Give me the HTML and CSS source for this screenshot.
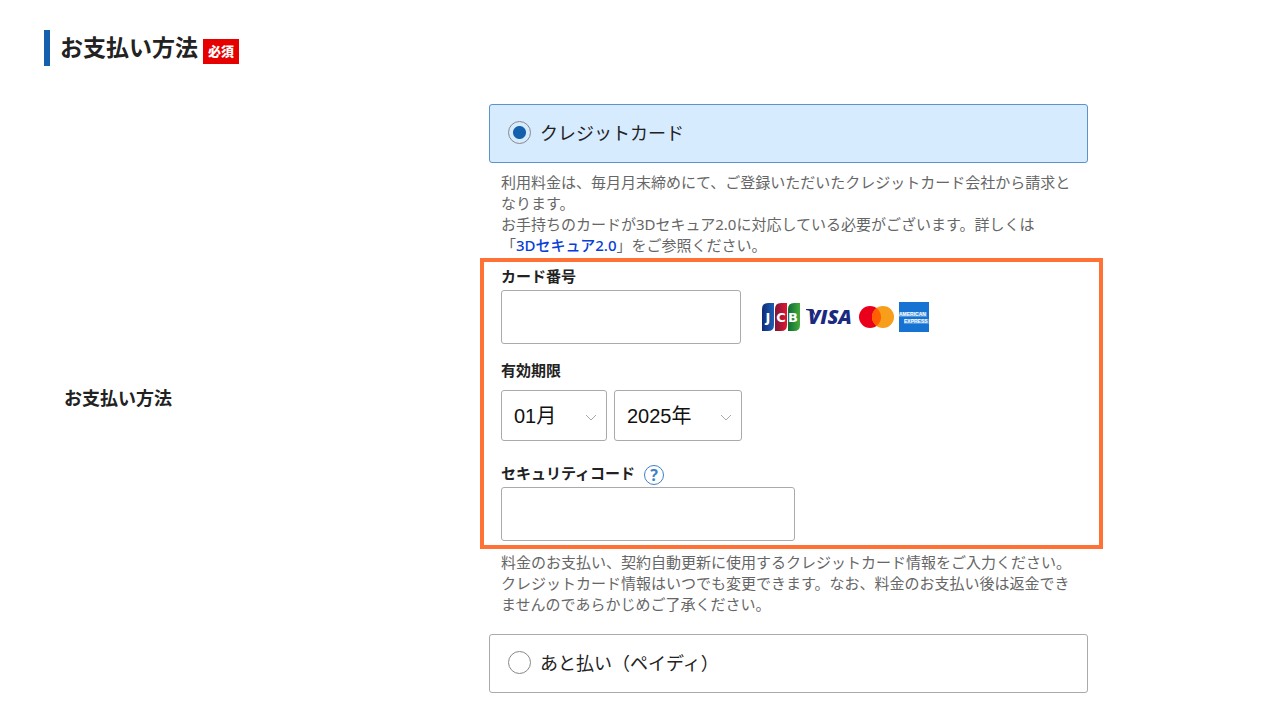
FILE: index.html
```html
<!DOCTYPE html>
<html lang="ja">
<head>
    <meta charset="UTF-8">
    <meta name="viewport" content="width=device-width, initial-scale=1.0">
    <title>お支払い方法</title>
    <link rel="stylesheet" href="styles.css">
</head>
<body>

    <main class="page">
        <header class="heading">
            <h1>お支払い方法</h1>
            <span class="required">必須</span>
        </header>

        <form class="payment">
            <h2 class="row-title" id="method-title">お支払い方法</h2>

            <div class="methods" role="radiogroup" aria-labelledby="method-title">
                <!-- クレジットカード -->
                <label class="option option-active">
                    <input type="radio" name="method" value="card" checked>
                    クレジットカード
                </label>

                <p class="note note-top">
                    利用料金は、毎月月末締めにて、ご登録いただいたクレジットカード会社から請求となります。<br>
                    お手持ちのカードが3Dセキュア2.0に対応している必要がございます。詳しくは<br>
                    「<a href="#">3Dセキュア2.0</a>」をご参照ください。
                </p>

                <div class="card-form">
                    <div class="field">
                        <label class="field-label" for="card-number">カード番号</label>
                        <div class="card-row">
                            <input class="text-box number-box" type="text" id="card-number" inputmode="numeric">
                            <div class="brands">
                                <!-- JCB -->
                                <svg width="39" height="30" viewBox="0 0 39 30" role="img" aria-label="JCB">
                                    <defs>
                                        <linearGradient id="jcb-blue"><stop offset="0" stop-color="#0f2a78"/><stop offset="1" stop-color="#1b5fb5"/></linearGradient>
                                        <linearGradient id="jcb-red"><stop offset="0" stop-color="#7d1735"/><stop offset="1" stop-color="#e01533"/></linearGradient>
                                        <linearGradient id="jcb-green"><stop offset="0" stop-color="#0c6b35"/><stop offset="1" stop-color="#45ab3c"/></linearGradient>
                                    </defs>
                                    <path d="M6 1H12V23Q12 29 6 29H0V7Q0 1 6 1Z" fill="url(#jcb-blue)"/>
                                    <path d="M19 1H25V23Q25 29 19 29H13V7Q13 1 19 1Z" fill="url(#jcb-red)"/>
                                    <path d="M32 1H38V23Q38 29 32 29H26V7Q26 1 32 1Z" fill="url(#jcb-green)"/>
                                    <text class="jcb-text" x="6 19 31" y="20" text-anchor="middle">JCB</text>
                                </svg>
                                <!-- VISA -->
                                <svg width="48" height="30" viewBox="0 0 48 30" role="img" aria-label="VISA">
                                    <path d="M0 7H6Q8 7 8 9L10 15Q7 9 0 8Z" fill="#1b2a80"/>
                                    <text class="visa-text" x="2" y="22">VISA</text>
                                </svg>
                                <!-- Mastercard -->
                                <svg width="35" height="22" viewBox="0 0 35 22" role="img" aria-label="Mastercard">
                                    <circle cx="11" cy="11" r="11" fill="#eb001b"/>
                                    <circle cx="24" cy="11" r="11" fill="#f79e1b"/>
                                    <path d="M17.500 2.100A11 11 0 0 1 17.500 19.900A11 11 0 0 1 17.500 2.100Z" fill="#ff5f00"/>
                                </svg>
                                <!-- American Express -->
                                <svg width="30" height="30" viewBox="0 0 30 30" role="img" aria-label="American Express">
                                    <rect width="30" height="30" fill="#1673d1"/>
                                    <rect x="0" y="10" width="28" height="5" fill="#4f98df"/>
                                    <rect x="5" y="17" width="25" height="5" fill="#4f98df"/>
                                    <text class="amex-text" x="0" y="14">AMERICAN</text>
                                    <text class="amex-text" x="5" y="21">EXPRESS</text>
                                </svg>
                            </div>
                        </div>
                    </div>

                    <div class="field expiry" role="group" aria-labelledby="expiry-title">
                        <span class="field-label" id="expiry-title">有効期限</span>
                        <div class="expiry-row">
                            <select class="month" aria-label="有効期限（月）">
                                <option>01月</option>
                            </select>
                            <select class="year" aria-label="有効期限（年）">
                                <option>2025年</option>
                            </select>
                        </div>
                    </div>

                    <div class="field">
                        <div class="code-title">
                            <label class="field-label" for="security-code">セキュリティコード</label>
                            <button class="help" type="button" aria-label="セキュリティコードについて">?</button>
                        </div>
                        <input class="text-box code-box" type="text" id="security-code" inputmode="numeric">
                    </div>
                </div>

                <p class="note note-bottom">
                    料金のお支払い、契約自動更新に使用するクレジットカード情報をご入力ください。<br>
                    クレジットカード情報はいつでも変更できます。なお、料金のお支払い後は返金できませんのであらかじめご了承ください。
                </p>

                <!-- あと払い -->
                <label class="option">
                    <input type="radio" name="method" value="paidy">
                    あと払い（ペイディ）
                </label>
            </div>
        </form>
    </main>

</body>
</html>
```

FILE: styles.css
```css
* {
    box-sizing: border-box;
}
body {
    margin: 0;
    background: #fff;
    color: #222;
    font-family: "Noto Sans", "Noto Sans CJK JP", sans-serif;
}
h1, h2, p {
    margin: 0;
}
.page {
    padding: 30px 15% 24px 44px;
}
.heading {
    display: flex;
    align-items: center;
    gap: 5px;
    border-left: 6px solid #1460ac;
    padding-left: 10px;
}
.heading h1 {
    padding-bottom: 2px;
    font-size: 23px;
    line-height: 34px;
}
.required {
    margin-top: 7px;
    padding: 0 5px;
    background: #e60000;
    color: #fff;
    font-size: 13px;
    font-weight: 900;
    line-height: 25px;
}
.payment {
    display: grid;
    grid-template-columns: 445px minmax(0, 1fr);
    align-items: center;
    margin-top: 38px;
}
.row-title {
    padding: 0 0 4px 20px;
    font-size: 18px;
}
.option {
    display: flex;
    align-items: center;
    gap: 9px;
    height: 59px;
    padding: 0 18px 3px;
    border: 1px solid #aaa;
    border-radius: 3px;
    font-size: 18px;
}
.option-active {
    border-color: #5b93cc;
    background: #d7ebff;
}
.option input {
    appearance: none;
    width: 23px;
    height: 23px;
    margin: 0;
    border: 1px solid #888;
    border-radius: 50%;
}
.option input:checked {
    background: radial-gradient(circle, #1460ac 6px, transparent 7px);
}
.note {
    padding: 0 12px;
    color: #666;
    font-size: 15px;
    line-height: 21px;
}
.note-top {
    margin: 9px 0 2px;
}
.note-bottom {
    margin: 3px 0 19px;
}
.note a {
    color: #0740d8;
    font-weight: 500;
    text-decoration: none;
}

/* カード情報 */
.card-form {
    margin: 0 -15px 0 -9px;
    padding: 0 17px 4px;
    border: 4px solid #ff7134;
}
.field-label {
    display: block;
    font-size: 15px;
    font-weight: bold;
    line-height: 28px;
}
.text-box {
    display: block;
    height: 54px;
    padding: 0 12px;
    border: 1px solid #aaa;
    border-radius: 3px;
    background: #fff;
    font: 20px "Liberation Sans", "Noto Sans CJK JP", sans-serif;
}
.number-box {
    width: 240px;
}
.code-box {
    width: 294px;
}
.card-row {
    display: flex;
    align-items: center;
    gap: 21px;
}
.brands {
    display: flex;
    align-items: center;
    gap: 5px;
}
.jcb-text {
    fill: #fff;
    font: bold 13px "DejaVu Sans", sans-serif;
}
.visa-text {
    fill: #1b2a80;
    font: italic 800 20px "Open Sans", sans-serif;
}
.amex-text {
    fill: #fff;
    font: bold 5px "Liberation Sans", sans-serif;
}
.expiry {
    margin: 12px 0 18px;
}
.expiry-row {
    display: flex;
    gap: 7px;
    margin-top: 6px;
}
select {
    appearance: none;
    height: 51px;
    padding: 0 12px;
    border: 1px solid #aaa;
    border-radius: 3px;
    background: #fff url("data:image/svg+xml,%3Csvg xmlns='http://www.w3.org/2000/svg' width='12' height='8'%3E%3Cpath d='M1 1L6 6L11 1' fill='none' stroke='%23aaa'/%3E%3C/svg%3E") no-repeat right 9px top 23px;
    color: #111;
    font: 20px "Liberation Sans", "Noto Sans CJK JP", sans-serif;
}
.month {
    width: 106px;
}
.year {
    width: 128px;
}
.code-title {
    display: flex;
    align-items: center;
    gap: 9px;
}
.help {
    width: 20px;
    height: 20px;
    margin-top: 4px;
    padding: 0;
    border: 1px solid #3e80c8;
    border-radius: 50%;
    background: #fff;
    color: #3e80c8;
    font: bold 16px/18px "Noto Sans", sans-serif;
}
```
